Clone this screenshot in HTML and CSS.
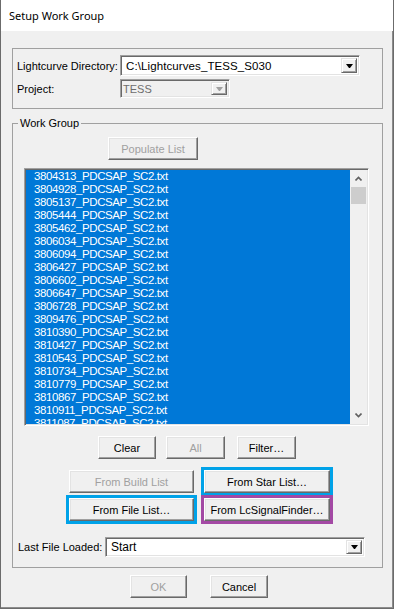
FILE: index.html
```html
<!DOCTYPE html>
<html lang="en">
<head>
  <meta charset="UTF-8" />
  <title>Setup Work Group</title>
  <link rel="stylesheet" href="styles.css">
</head>
<body>
  <div class="window">
    <div class="titlebar">Setup Work Group</div>

    <div class="client">
      <!-- Directory / project -->
      <div class="group top-group">
        <div class="field-row">
          <label class="field-label dir-label">Lightcurve Directory:</label>
          <div class="combo dir-combo">
            <span class="combo-text">C:\Lightcurves_TESS_S030</span>
            <span class="drop"></span>
          </div>
        </div>
        <div class="field-row project-row">
          <label class="field-label dir-label">Project:</label>
          <div class="combo project-combo disabled">
            <span class="combo-text">TESS</span>
            <span class="drop"></span>
          </div>
        </div>
      </div>

      <!-- Work group -->
      <fieldset class="work-group">
        <legend>Work Group</legend>
        <div class="work-inner">
          <button class="btn populate" disabled>Populate List</button>

          <div class="listbox">
            <div class="items">
              <div>3804313_PDCSAP_SC2.txt</div>
              <div>3804928_PDCSAP_SC2.txt</div>
              <div>3805137_PDCSAP_SC2.txt</div>
              <div>3805444_PDCSAP_SC2.txt</div>
              <div>3805462_PDCSAP_SC2.txt</div>
              <div>3806034_PDCSAP_SC2.txt</div>
              <div>3806094_PDCSAP_SC2.txt</div>
              <div>3806427_PDCSAP_SC2.txt</div>
              <div>3806602_PDCSAP_SC2.txt</div>
              <div>3806647_PDCSAP_SC2.txt</div>
              <div>3806728_PDCSAP_SC2.txt</div>
              <div>3809476_PDCSAP_SC2.txt</div>
              <div>3810390_PDCSAP_SC2.txt</div>
              <div>3810427_PDCSAP_SC2.txt</div>
              <div>3810543_PDCSAP_SC2.txt</div>
              <div>3810734_PDCSAP_SC2.txt</div>
              <div>3810779_PDCSAP_SC2.txt</div>
              <div>3810867_PDCSAP_SC2.txt</div>
              <div>3810911_PDCSAP_SC2.txt</div>
              <div>3811087_PDCSAP_SC2.txt</div>
            </div>
            <div class="scrollbar">
              <div class="arrow">
                <svg width="7" height="5" viewBox="0 0 7 5"><polyline points="0.5,4.5 3.5,1.5 6.5,4.5" /></svg>
              </div>
              <div class="thumb"></div>
              <div class="track"></div>
              <div class="arrow">
                <svg width="7" height="5" viewBox="0 0 7 5"><polyline points="0.5,0.5 3.5,3.5 6.5,0.5" /></svg>
              </div>
            </div>
          </div>

          <div class="list-actions">
            <button class="btn clear">Clear</button>
            <button class="btn all" disabled>All</button>
            <button class="btn filter">Filter…</button>
          </div>

          <div class="sources">
            <button class="btn" disabled>From Build List</button>
            <button class="btn mark-blue">From Star List…</button>
            <button class="btn mark-blue">From File List…</button>
            <button class="btn mark-purple">From LcSignalFinder…</button>
          </div>

          <div class="field-row last-row">
            <label class="field-label last-label">Last File Loaded:</label>
            <div class="combo last-combo">
              <span class="combo-text">Start</span>
              <span class="drop"></span>
            </div>
          </div>
        </div>
      </fieldset>

      <!-- Dialog buttons -->
      <div class="dialog-buttons">
        <button class="btn ok" disabled>OK</button>
        <button class="btn cancel">Cancel</button>
      </div>
    </div>
  </div>
</body>
</html>
```

FILE: styles.css
```css
/* Classic Windows dialog */
body {
  margin: 0;
  background: #f0f0f0;
  font-family: "Liberation Sans", Arial, sans-serif;
  font-size: 11px;
  color: #000;
}

.window {
  width: 394px;
  height: 609px;
  box-sizing: border-box;
  border: 1px solid #6b6b6b;
  border-top: none;
  box-shadow: inset -1px 0 #8c8c8c, inset 0 -1px #8c8c8c;
  background: #f0f0f0;
}

.titlebar {
  height: 31px;
  box-sizing: border-box;
  padding-left: 8px;
  background: #fff;
  font-family: "Noto Sans", "Open Sans", sans-serif;
  font-size: 11px;
  line-height: 31px;
}

.client {
  padding: 0 0 0 11px;
}

/* Group boxes */
.group {
  border: 1px solid #a0a0a0;
}

.top-group {
  width: 371px;
  height: 61px;
  box-sizing: border-box;
  margin-top: 17px;
  padding: 6px 0 0 4px;
}

.field-row {
  display: flex;
  align-items: center;
}

.project-row {
  margin-top: 3px;
}

.dir-label {
  width: 103px;
}

/* Combo boxes */
.combo {
  box-sizing: border-box;
  display: flex;
  background: #fff;
  border: 1px solid;
  border-color: #a0a0a0 #fff #fff #a0a0a0;
  box-shadow: inset 1px 1px #696969, inset -1px -1px #e3e3e3;
  padding: 1px;
}

.combo-text {
  flex: 1;
  padding-left: 4px;
  display: flex;
  align-items: center;
  white-space: nowrap;
}

.dir-combo {
  width: 240px;
  height: 21px;
  font-size: 11.5px;
  letter-spacing: 0.1px;
}

.project-combo {
  width: 110px;
  height: 19px;
}

.combo.disabled {
  background: #f0f0f0;
}

.combo.disabled .combo-text {
  color: #6d6d6d;
  padding-left: 1px;
}

.drop {
  width: 16px;
  box-sizing: border-box;
  margin: 1px;
  display: flex;
  align-items: center;
  justify-content: center;
  background: #f0f0f0;
  border: 1px solid;
  border-color: #e3e3e3 #696969 #696969 #e3e3e3;
  box-shadow: inset 1px 1px #fff, inset -1px -1px #a0a0a0;
}

.drop::after {
  content: "";
  width: 1px;
  border-left: 3px solid transparent;
  border-right: 3px solid transparent;
  border-top: 4px solid #000;
}

.combo.disabled .drop::after {
  border-top-color: #a0a0a0;
}

/* Work group */
.work-group {
  width: 371px;
  box-sizing: border-box;
  margin: 8px 0 0 0;
  padding: 0;
  border: 1px solid #a0a0a0;
}

.work-group legend {
  margin-left: 5px;
  padding: 0 2px;
  line-height: 13px;
}

.work-inner {
  padding: 7px 0 10px 5px;
}

/* Buttons */
.btn {
  display: block;
  box-sizing: border-box;
  height: 23px;
  padding: 0;
  background: #f0f0f0;
  border: 1px solid;
  border-color: #fff #696969 #696969 #fff;
  box-shadow: inset -1px -1px #a0a0a0, inset 1px 1px #e3e3e3;
  font: inherit;
  color: #000;
}

.btn:disabled {
  color: #a0a0a0;
}

.populate {
  width: 90px;
  margin-left: 90px;
}

/* List box */
.listbox {
  width: 345px;
  height: 258px;
  box-sizing: border-box;
  margin: 8px 0 0 6px;
  display: flex;
  border: 1px solid;
  border-color: #a0a0a0 #fff #fff #a0a0a0;
  box-shadow: inset 1px 1px #696969, inset -1px -1px #e3e3e3;
  padding: 1px;
}

.items {
  flex: 1;
  overflow: hidden;
  background: #0078d7;
  color: #fff;
  font-size: 11.5px;
  letter-spacing: -0.4px;
  line-height: 13px;
  padding-left: 8px;
}

.scrollbar {
  width: 17px;
  display: flex;
  flex-direction: column;
  background: #f0f0f0;
}

.arrow {
  height: 17px;
  display: flex;
  align-items: center;
  justify-content: center;
}

.arrow svg polyline {
  fill: none;
  stroke: #606060;
  stroke-width: 1.6;
}

.thumb {
  height: 17px;
  margin: 0 1px;
  background: #cdcdcd;
}

.track {
  flex: 1;
}

.list-actions {
  display: flex;
  margin: 10px 0 0 80px;
}

.clear {
  width: 58px;
}

.all {
  width: 59px;
  margin-left: 10px;
}

.filter {
  width: 59px;
  margin-left: 12px;
}

/* Load source buttons */
.sources {
  display: grid;
  grid-template-columns: 125px 126px;
  column-gap: 10px;
  row-gap: 5px;
  margin: 11px 0 0 51px;
}

.mark-blue {
  outline: 3px solid #00a2e8;
}

.mark-purple {
  outline: 3px solid #a349a4;
}

.last-row {
  margin-top: 16px;
}

.last-label {
  width: 87px;
}

.last-combo {
  width: 260px;
  height: 20px;
  font-size: 12px;
}

/* OK / Cancel */
.dialog-buttons {
  display: flex;
  margin: 7px 0 0 118px;
}

.ok {
  width: 57px;
}

.cancel {
  width: 58px;
  margin-left: 23px;
}
```
